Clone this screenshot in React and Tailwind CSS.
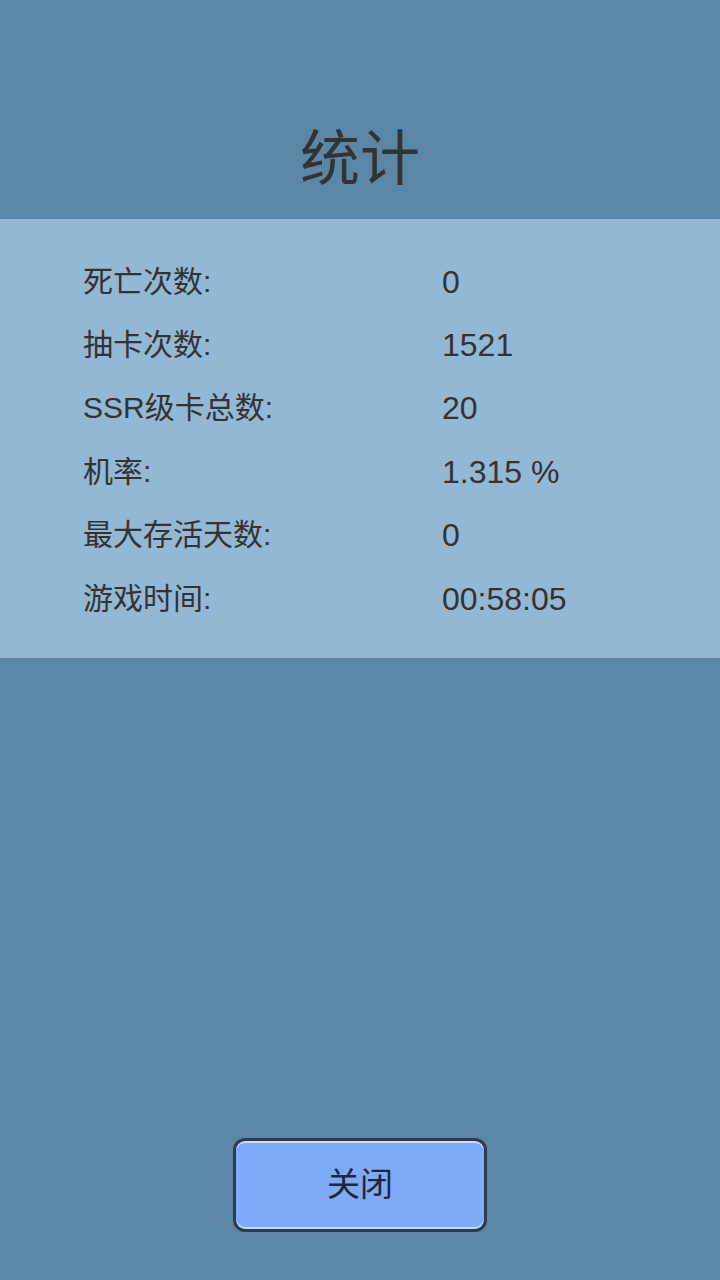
const FONT = { fontFamily: '"Liberation Sans", "Noto Sans CJK SC", sans-serif' };

const STATS = [
  ["死亡次数:", "0"],
  ["抽卡次数:", "1521"],
  ["SSR级卡总数:", "20"],
  ["机率:", "1.315 %"],
  ["最大存活天数:", "0"],
  ["游戏时间:", "00:58:05"],
];

export default function App() {
  return (
    <div
      className="h-[1280px] w-[720px] bg-[#5b87a6] text-[#333333] flex flex-col"
      style={FONT}
    >
      <div className="h-[219px] flex justify-center pt-[130px]">
        <h1 className="text-[60px] leading-none">统计</h1>
      </div>

      <div className="bg-[#92b8d3] pt-[31px] pb-[28px]">
        {STATS.map(([label, value]) => (
          <div key={label} className="h-[63.4px] flex items-center">
            <span className="w-[442px] pl-[83px] text-[30px] leading-none">{label}</span>
            <span className="text-[32px] leading-none">{value}</span>
          </div>
        ))}
      </div>

      <div className="flex-1 flex items-end justify-center pb-[48px]">
        <button className="w-[254px] h-[94px] rounded-[12px] border-[3px] border-[#2b3d4e] bg-[#7eabf8] shadow-[inset_0_2px_0_#c6dcff,inset_0_-2px_0_#c6dcff] text-[33px] text-[#222831] flex items-center justify-center">
          关闭
        </button>
      </div>
    </div>
  );
}
